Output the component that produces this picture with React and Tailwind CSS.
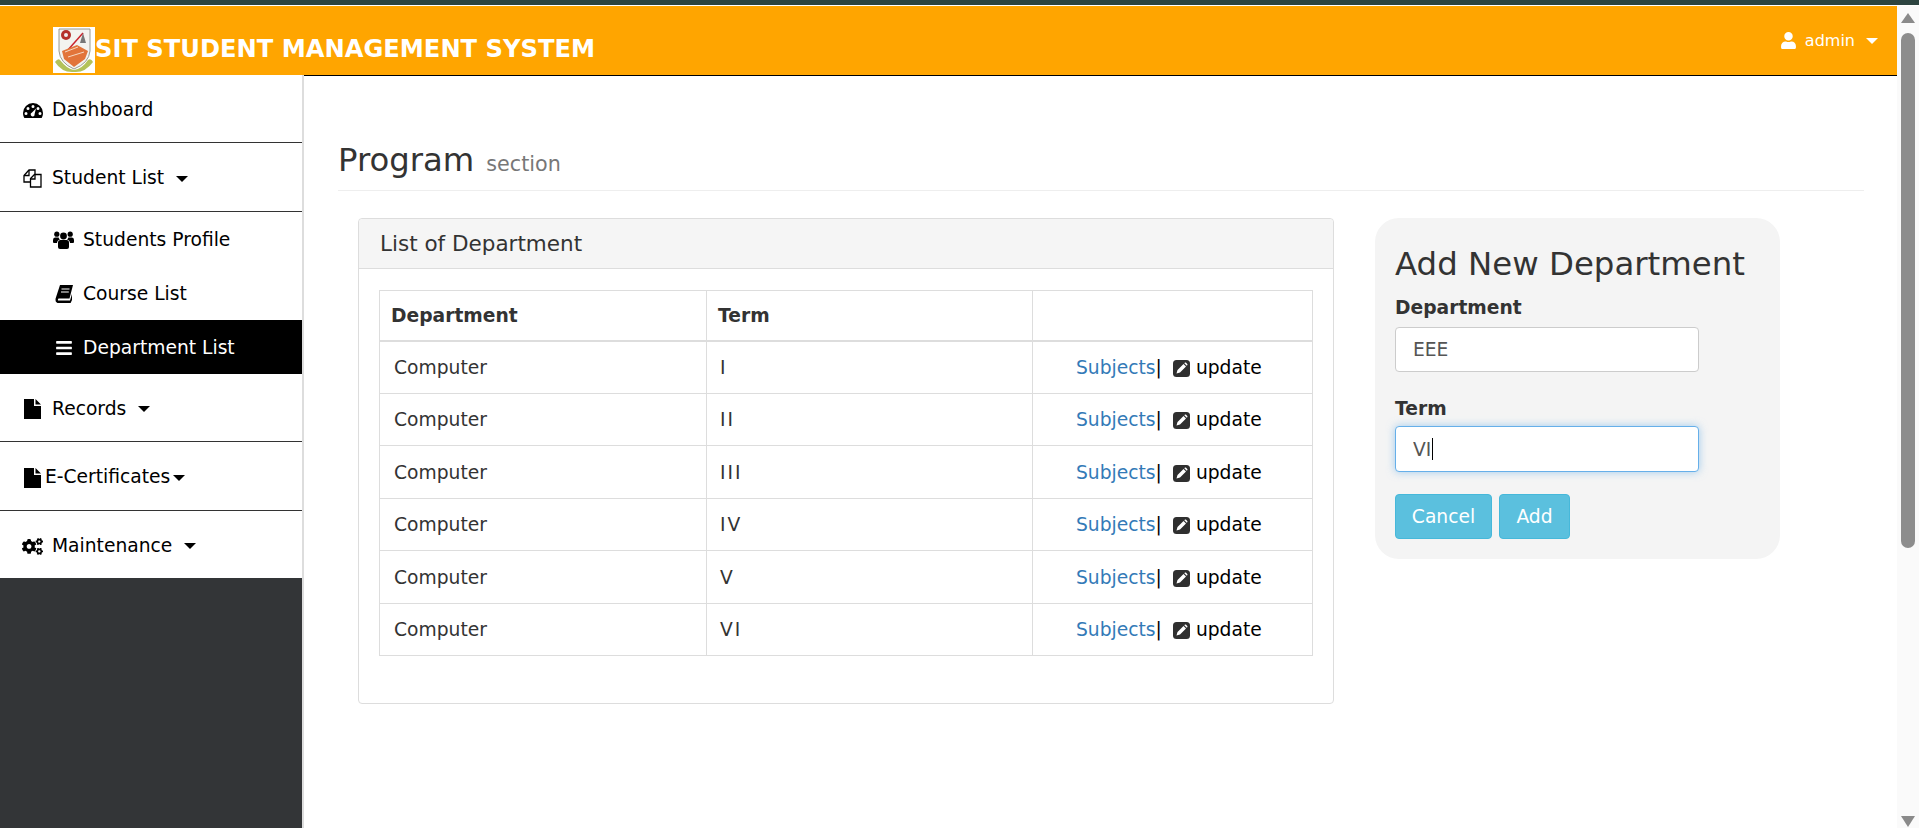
import { FaBars, FaCogs, FaUser } from 'react-icons/fa'

const rows = ['I', 'II', 'III', 'IV', 'V', 'VI']

function Caret({ className = 'border-t-black' }) {
  return <span className={`inline-block w-0 h-0 border-x-[6px] border-x-transparent border-t-[6px] ${className}`} />
}

function DashboardIcon() {
  return (
    <svg viewBox="0 0 20 15" className="w-[20px] h-[15px]">
      <path fillRule="evenodd" fill="currentColor" d="M10 0a10 10 0 0 1 10 10c0 2-.6 3.6-1.4 5H1.4C.6 13.6 0 12 0 10A10 10 0 0 1 10 0ZM10 2a1.5 1.5 0 1 0 0 3 1.5 1.5 0 0 0 0-3ZM5 4a1.5 1.5 0 1 0 0 3 1.5 1.5 0 0 0 0-3ZM15 4a1.5 1.5 0 1 0 0 3 1.5 1.5 0 0 0 0-3ZM3 9a1.5 1.5 0 1 0 0 3 1.5 1.5 0 0 0 0-3ZM17 9a1.5 1.5 0 1 0 0 3 1.5 1.5 0 0 0 0-3ZM13 5.5 9 9.6a2 2 0 1 0 2.6 1.4Z" />
    </svg>
  )
}

function CopyIcon() {
  return (
    <svg viewBox="0 0 19 19" className="w-[19px] h-[19px]" fill="none" stroke="currentColor" strokeWidth="1.3">
      <path d="M7.5 13H1V6.5L6 1h6v4.5" />
      <path d="M6 1v5.5H1" />
      <path d="M7.5 18V9.5L11.5 5.5H18V18Z" fill="#fff" />
      <path d="M12 5.5v4.5H7.5" />
    </svg>
  )
}

function UsersIcon() {
  return (
    <svg viewBox="0 0 21 18" className="w-[21px] h-[18px]" fill="currentColor">
      <circle cx="10.5" cy="5" r="3.4" />
      <circle cx="3.8" cy="3.2" r="2.6" />
      <circle cx="17.2" cy="3.2" r="2.6" />
      <path d="M5 11.5Q5 9 7.5 9H13.5Q16 9 16 11.5V16Q16 18 14 18H7Q5 18 5 16Z" />
      <path d="M0 9Q0 6.5 2 6.5H5.6Q6 8 7 8.4 4.2 9 4 12H1Q0 12 0 11ZM21 9Q21 6.5 19 6.5H15.4Q15 8 14 8.4 16.8 9 17 12H20Q21 12 21 11Z" />
    </svg>
  )
}

function BookIcon() {
  return (
    <svg viewBox="0 0 18 18" className="w-[18px] h-[18px]">
      <path fill="currentColor" d="M5 0H18L14.5 13.5H3.5Q2.6 14.5 3 15.5H15L17 9V15L15.6 18H2.5Q0 17 .6 13.5Z" />
      <path stroke="#fff" strokeWidth="1.2" d="M6.5 4H14.5M6 7H13.8" />
    </svg>
  )
}

function FileIcon() {
  return (
    <svg viewBox="0 0 17 20" className="w-[17px] h-[20px]">
      <path fill="currentColor" d="M0 0H10V7H17V20H0ZM11.5 0 17 5.5H11.5Z" />
    </svg>
  )
}

function PencilSquare() {
  return (
    <svg viewBox="0 0 17 17" className="w-[17px] h-[17px] inline-block align-[-3px] ml-[11px] mr-[6px]">
      <rect width="17" height="17" rx="3.5" fill="#2f2f2f" />
      <path fill="#fff" d="M3.5 13.5 4.5 10 10.5 4 13 6.5 7 12.5ZM11.3 3.2 12 2.6Q12.6 2.3 13.1 2.8L14.2 3.9Q14.7 4.4 14.4 5L13.8 5.7Z" />
    </svg>
  )
}

function MenuItem({ icon, label, caret, gap = 'gap-[9px]', divider, className = 'h-[67px]' }) {
  return (
    <div className={`flex items-center pl-[22px] pt-[3px] text-[18.7px] text-black ${gap} ${className} ${divider ? 'border-b border-[#333]' : ''}`}>
      <span className="w-[21px] flex justify-center shrink-0">{icon}</span>
      <span>{label}</span>
      {caret && <Caret className={`border-t-black ${caret}`} />}
    </div>
  )
}

function SubItem({ icon, label, active }) {
  return (
    <div className={`flex items-center h-[54px] pl-[53px] pt-[2px] gap-[9px] text-[18.7px] ${active ? 'bg-black text-white' : 'text-black'}`}>
      <span className="w-[21px] flex justify-center">{icon}</span>
      <span>{label}</span>
    </div>
  )
}

function Logo() {
  return (
    <svg viewBox="0 0 42 46" className="w-[42px] h-[46px] shrink-0 bg-white self-end mb-[2px]">
      <path d="M6 2 H37 V24 Q36 36 21 42 Q7 36 6 24 Z" fill="#f3f3ef" stroke="#9a9a92" strokeWidth="1" />
      <circle cx="13" cy="8" r="5" fill="#b5302a" />
      <circle cx="13" cy="8" r="2" fill="#eee" />
      <path d="M14 24 L30 6" stroke="#c9242c" strokeWidth="1.5" />
      <path d="M27 16 L30 6 L33 16 Z" fill="#777" />
      <path d="M9 24 L24 18 L35 24 L32 32 L21 40 L11 32 Z" fill="#e2743a" />
      <path d="M12 25 L25 20 M15 30 L31 25" stroke="#f6d9c4" strokeWidth="1" />
      <path d="M2 35 Q5 31 7 33 Q14 42 21 43 Q29 42 35 33 Q38 31 40 35 Q32 46 21 45 Q9 46 2 35 Z" fill="#b3c25a" />
    </svg>
  )
}

export default function App() {
  return (
    <div className="h-[828px] overflow-hidden flex flex-col bg-white font-['DejaVu_Sans',sans-serif] text-[#333]">
      <div className="h-[5px] bg-[#2d4440] shrink-0" />
      <div className="h-px bg-white shrink-0" />
      <div className="flex flex-1 min-h-0">
        <div className="flex-1 min-w-0 flex flex-col">
          {/* Top bar */}
          <header className="h-[70px] shrink-0 bg-[#ffa500] flex items-end justify-between pl-[53px] pr-[19px] border-b border-black">
            <div className="flex items-end h-full">
              <Logo />
              <span className="text-[24.2px] font-bold text-white leading-none mb-[14px]">SIT STUDENT MANAGEMENT SYSTEM</span>
            </div>
            <div className="flex items-center gap-[8px] text-white text-[16px] h-full">
              <FaUser className="text-[17px]" />
              <span>admin</span>
              <Caret className="border-t-white ml-[3px] border-x-[5px] border-t-[5px]" />
            </div>
          </header>

          <div className="flex flex-1 min-h-0">
            {/* Sidebar */}
            <aside className="w-[304px] shrink-0 flex flex-col bg-[#333537] border-r-2 border-[#ddd] -mt-px">
              <div className="bg-white">
                <MenuItem icon={<DashboardIcon />} label="Dashboard" divider className="h-[68px]" />
                <MenuItem icon={<CopyIcon />} label="Student List" caret="ml-[3px]" divider className="h-[69px]" />
                <SubItem icon={<UsersIcon />} label="Students Profile" />
                <SubItem icon={<BookIcon />} label="Course List" />
                <SubItem icon={<FaBars className="text-[18px]" />} label="Department List" active />
                <MenuItem icon={<FileIcon />} label="Records" caret="ml-[3px]" divider className="h-[68px]" />
                <MenuItem icon={<FileIcon />} label="E-Certificates" caret="ml-px" gap="gap-[2px]" divider className="h-[69px]" />
                <MenuItem icon={<FaCogs className="text-[21px]" />} label="Maintenance" caret="ml-[3px]" className="h-[67px]" />
              </div>
            </aside>

            {/* Main */}
            <main className="flex-1 min-w-0 pl-[34px] pr-[33px]">
              <div className="mt-[61px] h-[54px] border-b border-[#eee] flex items-baseline gap-[12px]">
                <h1 className="text-[32.3px] leading-[46px] text-[#333]">Program</h1>
                <small className="text-[20.7px] text-[#777]">section</small>
              </div>

              <div className="flex mt-[27px] pl-[20px] gap-[41px] items-start">
                <section className="w-[976px] h-[486px] border border-[#ddd] rounded-[4px] shrink-0">
                  <div className="h-[50px] bg-[#f5f5f5] border-b border-[#ddd] flex items-center px-[21px] pt-[2px] text-[21.5px] rounded-t-[4px]">List of Department</div>
                  <div className="px-[20px] pt-[21px]">
                    <table className="w-[934px] border-collapse table-fixed text-[18.7px]">
                      <thead>
                        <tr className="h-[50px]">
                          <th className="w-[327px] border border-[#ddd] border-b-2 text-left font-bold px-[11px] pt-[2px]">Department</th>
                          <th className="w-[326px] border border-[#ddd] border-b-2 text-left font-bold px-[11px] pt-[2px]">Term</th>
                          <th className="border border-[#ddd] border-b-2"></th>
                        </tr>
                      </thead>
                      <tbody>
                        {rows.map((term) => (
                          <tr key={term} className="h-[52.5px]">
                            <td className="border border-[#ddd] px-[14px] pt-[2px]">Computer</td>
                            <td className="border border-[#ddd] px-[13px] pt-[2px] tracking-[2px]">{term}</td>
                            <td className="border border-[#ddd] pl-[43px] pt-[2px] text-black whitespace-nowrap">
                              <a href="#" className="text-[#337ab7]">Subjects</a>
                              <span>|</span>
                              <PencilSquare />
                              <span>update</span>
                            </td>
                          </tr>
                        ))}
                      </tbody>
                    </table>
                  </div>
                </section>

                {/* Add form */}
                <section className="w-[405px] h-[341px] rounded-[24px] bg-[#f4f4f4] px-[20px] pt-[26px]">
                  <h2 className="text-[32.4px] leading-[40px] whitespace-nowrap">Add New Department</h2>
                  <label className="block text-[18.7px] leading-[22px] font-bold mt-[13px] mb-[8px]">Department</label>
                  <input readOnly value="EEE" className="block w-[304px] h-[45px] px-[17px] text-[18.7px] text-[#555] bg-white border border-[#ccc] rounded-[4px] outline-none" />
                  <label className="block text-[18.7px] leading-[22px] font-bold mt-[26px] mb-[6px]">Term</label>
                  <div className="relative w-[304px]">
                    <input readOnly value="VI" className="block w-full h-[46px] px-[17px] text-[18.7px] text-[#555] bg-white border border-[#66afe9] rounded-[4px] outline-none shadow-[0_0_8px_rgba(102,175,233,0.6)]" />
                    <span className="absolute left-[37px] top-[12px] w-px h-[22px] bg-black" />
                  </div>
                  <div className="flex gap-[7px] mt-[22px]">
                    <button className="h-[45px] w-[97px] pt-[2px] rounded-[4px] bg-[#5bc0de] border border-[#46b8da] text-white text-[18.7px]">Cancel</button>
                    <button className="h-[45px] w-[71px] pt-[2px] rounded-[4px] bg-[#5bc0de] border border-[#46b8da] text-white text-[18.7px]">Add</button>
                  </div>
                </section>
              </div>
            </main>
          </div>
        </div>

        {/* Browser scrollbar */}
        <div className="w-[22px] shrink-0 bg-[#fafafa] flex flex-col items-center">
          <span className="mt-[7px] w-0 h-0 border-x-[7px] border-x-transparent border-b-[10px] border-b-[#8a8a8a]" />
          <span className="mt-[10px] w-[14px] h-[515px] rounded-full bg-[#8d8d8d]" />
          <span className="mt-auto mb-px w-0 h-0 border-x-[7px] border-x-transparent border-t-[11px] border-t-[#8a8a8a]" />
        </div>
      </div>
    </div>
  )
}
